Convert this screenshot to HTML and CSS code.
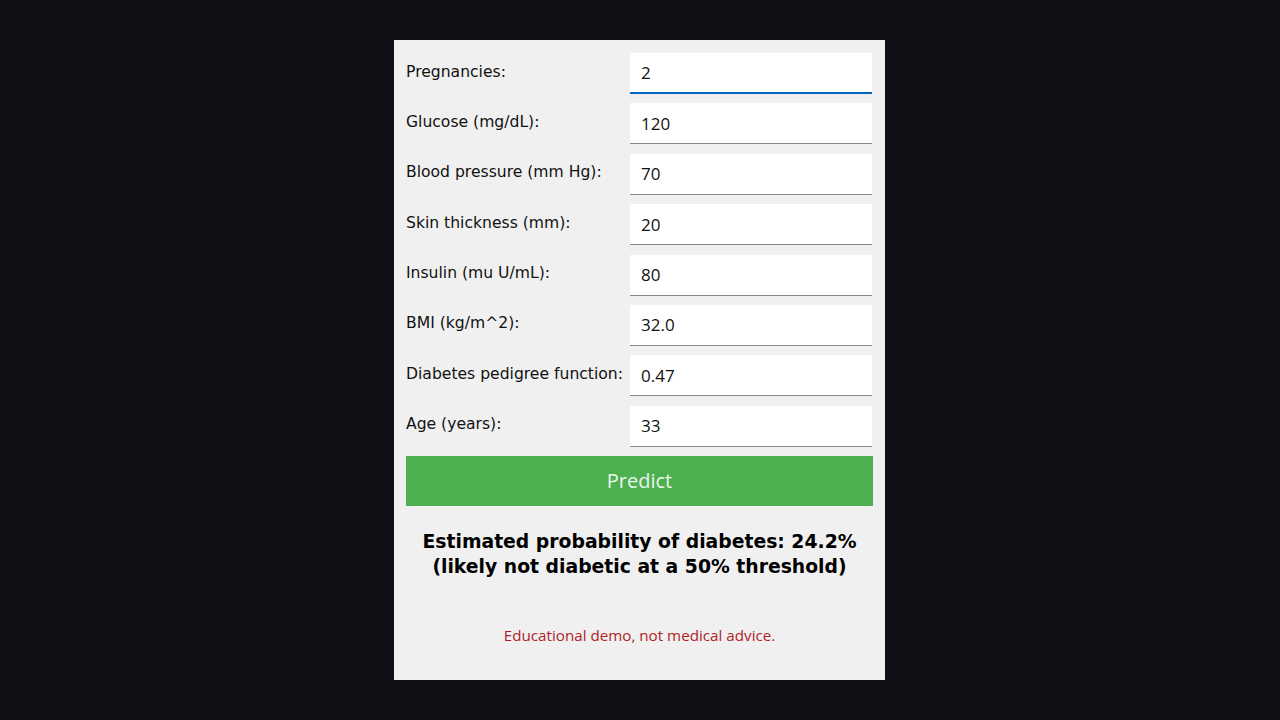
FILE: index.html
```html
<!DOCTYPE html>
<html>
<head>
<meta charset="utf-8">
<link rel="stylesheet" href="styles.css">
</head>
<body>
<div class="panel">
  <div class="form">
    <div class="row"><span class="label">Pregnancies:</span><div class="field focus">2</div></div>
    <div class="row"><span class="label">Glucose (mg/dL):</span><div class="field">120</div></div>
    <div class="row"><span class="label">Blood pressure (mm Hg):</span><div class="field">70</div></div>
    <div class="row"><span class="label">Skin thickness (mm):</span><div class="field">20</div></div>
    <div class="row"><span class="label">Insulin (mu U/mL):</span><div class="field">80</div></div>
    <div class="row"><span class="label">BMI (kg/m^2):</span><div class="field">32.0</div></div>
    <div class="row"><span class="label">Diabetes pedigree function:</span><div class="field">0.47</div></div>
    <div class="row"><span class="label">Age (years):</span><div class="field">33</div></div>
  </div>
  <div class="predict">Predict</div>
  <div class="result">Estimated probability of diabetes: 24.2%<br>(likely not diabetic at a 50% threshold)</div>
  <div class="note">Educational demo, not medical advice.</div>
</div>
</body>
</html>
```
FILE: styles.css
```css
html, body {
  margin: 0;
  padding: 0;
}
body {
  background: #0f1117;
  width: 1280px;
  height: 720px;
  display: flex;
  justify-content: center;
  align-items: flex-start;
}
.panel {
  margin-top: 40px;
  margin-left: -1px;
  width: 491px;
  height: 640px;
  background: #f0f0f0;
  box-sizing: border-box;
  padding: 13px 12px 0 12px;
  display: flex;
  flex-direction: column;
}
.form {
  display: flex;
  flex-direction: column;
  gap: 9.4px;
}
.row {
  display: flex;
  align-items: center;
  height: 41px;
  justify-content: space-between;
}
.label {
  font-family: "DejaVu Sans", sans-serif;
  font-size: 15.6px;
  color: #111;
  margin-top: -4px;
}
.field {
  width: 242px;
  height: 41px;
  box-sizing: border-box;
  background: #fff;
  border-bottom: 1px solid #8a8a8a;
  padding: 0 11px 0 11px;
  display: flex;
  align-items: center;
  font-family: "Open Sans", "Noto Sans", sans-serif;
  font-size: 17px;
  color: #111;
  margin-right: 1px;
}
.field.focus {
  border-bottom: 2px solid #0067c0;
}
.predict {
  margin-top: 9px;
  height: 50px;
  background: #4caf50;
  color: #eaf6ea;
  font-family: "Open Sans", "Noto Sans", sans-serif;
  font-size: 20px;
  display: flex;
  align-items: center;
  justify-content: center;
}
.result {
  margin-top: 23px;
  text-align: center;
  font-family: "DejaVu Sans", sans-serif;
  font-weight: bold;
  font-size: 18.8px;
  line-height: 25px;
  color: #000;
}
.note {
  margin-top: 46px;
  text-align: center;
  font-family: "Open Sans", "Noto Sans", sans-serif;
  font-size: 15.2px;
  color: #b01e28;
}
```
